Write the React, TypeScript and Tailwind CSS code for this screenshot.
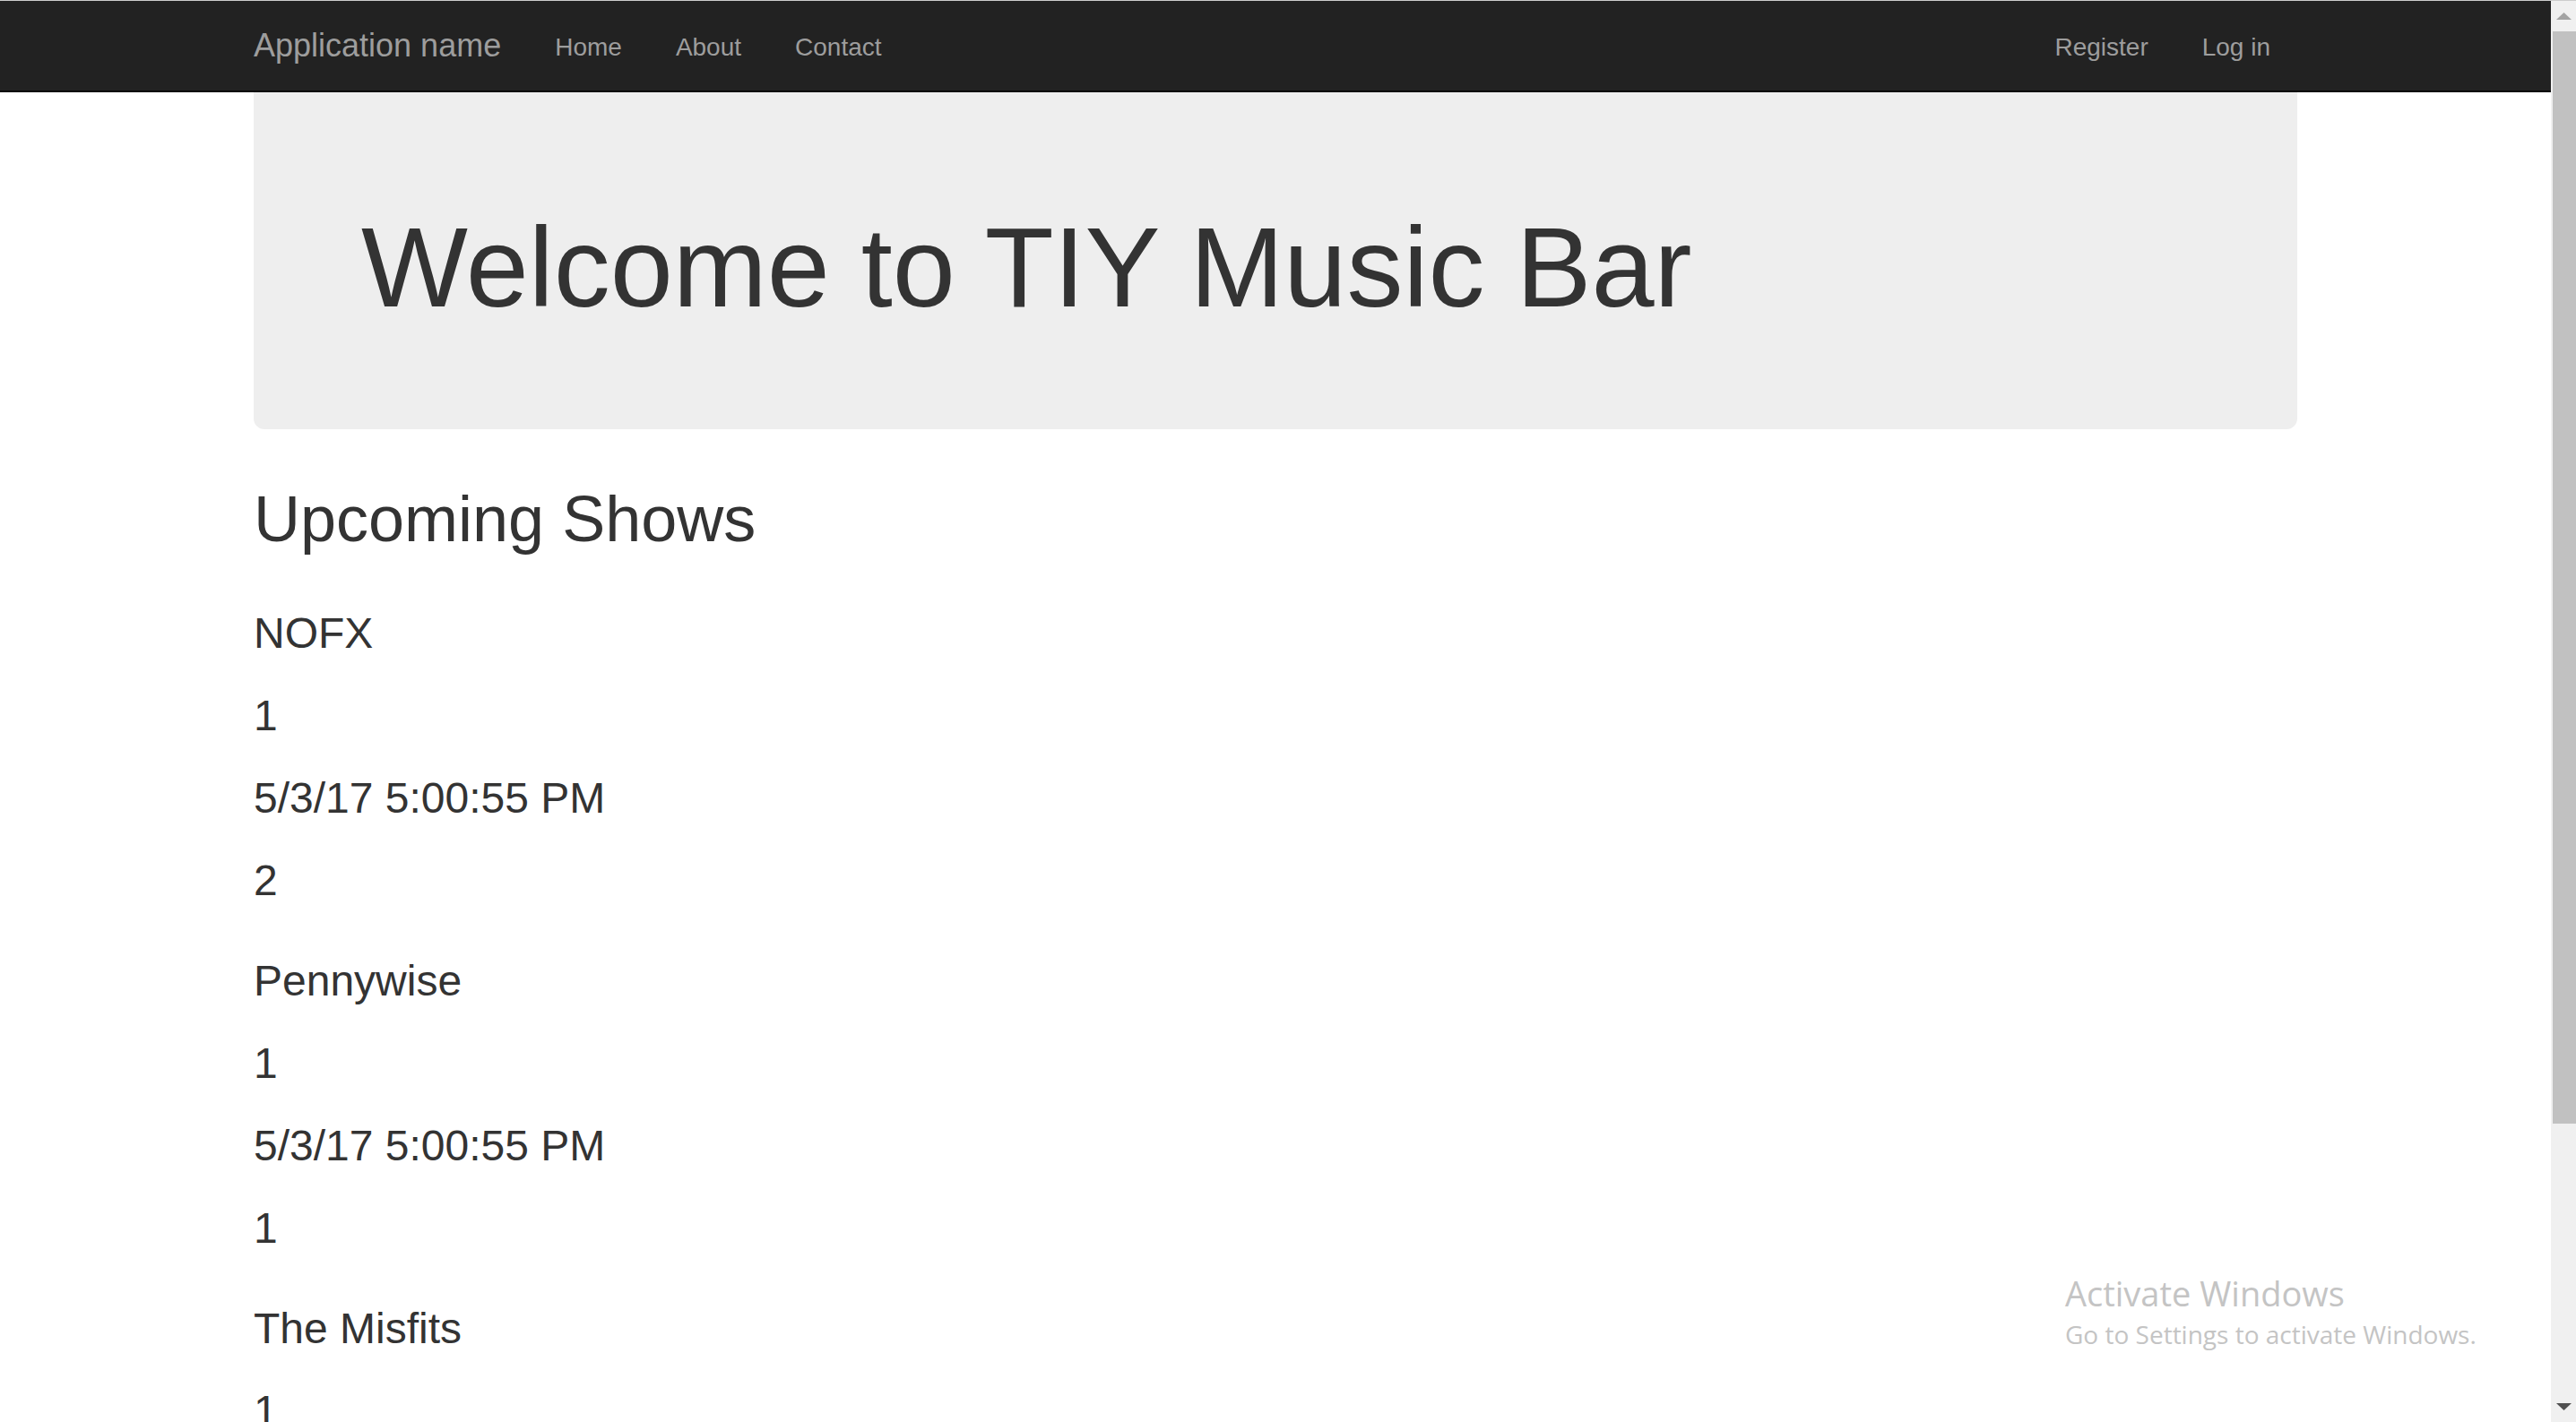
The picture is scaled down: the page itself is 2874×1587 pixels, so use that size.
import React from "react";

type Show = {
    band: string;
    rows: string[];
};

const SHOWS: Show[] = [
    {band: "NOFX", rows: ["1", "5/3/17 5:00:55 PM", "2"]},
    {band: "Pennywise", rows: ["1", "5/3/17 5:00:55 PM", "1"]},
    {band: "The Misfits", rows: ["1", "5/3/17 5:00:55 PM", "1"]},
];

const NAV_LEFT: string[] = ["Home", "About", "Contact"];
const NAV_RIGHT: string[] = ["Register", "Log in"];

function NavBar() {
    return (
        <div className="h-[103px] bg-[#222222] border-b-2 border-[#080808]">
            <div className="w-[2280px] mx-auto flex justify-between">
                <div className="flex">
                    <a className="text-[36px] leading-[40px] py-[30px] pr-[30px] text-[#9d9d9d]">
                        Application name
                    </a>
                    <ul className="flex">
                        {NAV_LEFT.map((link) => (
                            <li key={link} className="px-[30px] pt-[32px] pb-[28px] text-[28px] leading-[40px] text-[#9d9d9d]">
                                {link}
                            </li>
                        ))}
                    </ul>
                </div>
                <ul className="flex">
                    {NAV_RIGHT.map((link) => (
                        <li key={link} className="px-[30px] pt-[32px] pb-[28px] text-[28px] leading-[40px] text-[#9d9d9d]">
                            {link}
                        </li>
                    ))}
                </ul>
            </div>
        </div>
    );
}

function ShowGroup({show}: {show: Show}) {
    return (
        <div className="flex flex-col gap-[40px]">
            <h3 className="text-[48px] leading-[52px]">{show.band}</h3>
            {show.rows.map((row, i) => (
                <h3 key={i} className="text-[48px] leading-[52px]">{row}</h3>
            ))}
        </div>
    );
}

function ScrollBar() {
    return (
        <div className="w-[28px] shrink-0 bg-[#f0f0f0] flex flex-col">
            <div className="h-[34px] flex items-center justify-center">
                <svg width="17" height="8" viewBox="0 0 17 8">
                    <polygon points="8.5,0 17,8 0,8" fill="#a3a3a3"/>
                </svg>
            </div>
            <div className="ml-[2px] w-[26px] h-[1219px] bg-[#c1c1c1]"></div>
            <div className="flex-1"></div>
            <div className="h-[34px] flex items-center justify-center">
                <svg width="17" height="8" viewBox="0 0 17 8">
                    <polygon points="0,0 17,0 8.5,8" fill="#505050"/>
                </svg>
            </div>
        </div>
    );
}

export default function App() {
    return (
        <div
            className="relative h-[1587px] overflow-hidden bg-white border-t border-[#cdcdcd] flex text-[#333333]"
            style={{fontFamily: '"Liberation Sans", Arial, Helvetica, sans-serif'}}
        >
            <div className="flex-1 flex flex-col">
                <NavBar/>

                <div className="w-[2280px] mx-auto">
                    {/* Jumbotron */}
                    <div className="bg-[#eeeeee] rounded-b-[12px] px-[120px] pt-[127px] pb-[110px]">
                        <h1 className="text-[126px] leading-[1.1]">Welcome to TIY Music Bar</h1>
                    </div>

                    <h1 className="mt-[61px] text-[72px] leading-[1.1]">Upcoming Shows</h1>

                    <div className="mt-[62px] flex flex-col gap-[60px]">
                        {SHOWS.map((show) => (
                            <ShowGroup key={show.band} show={show}/>
                        ))}
                    </div>
                </div>
            </div>

            <ScrollBar/>

            {/* Windows activation watermark */}
            <div
                className="absolute left-[2304px] top-[1423px] text-[#c4c4c4]"
                style={{fontFamily: '"Open Sans", "Noto Sans", sans-serif'}}
            >
                <div className="text-[38px] leading-none">Activate Windows</div>
                <div className="mt-[13px] text-[28px] leading-none">Go to Settings to activate Windows.</div>
            </div>
        </div>
    );
}
